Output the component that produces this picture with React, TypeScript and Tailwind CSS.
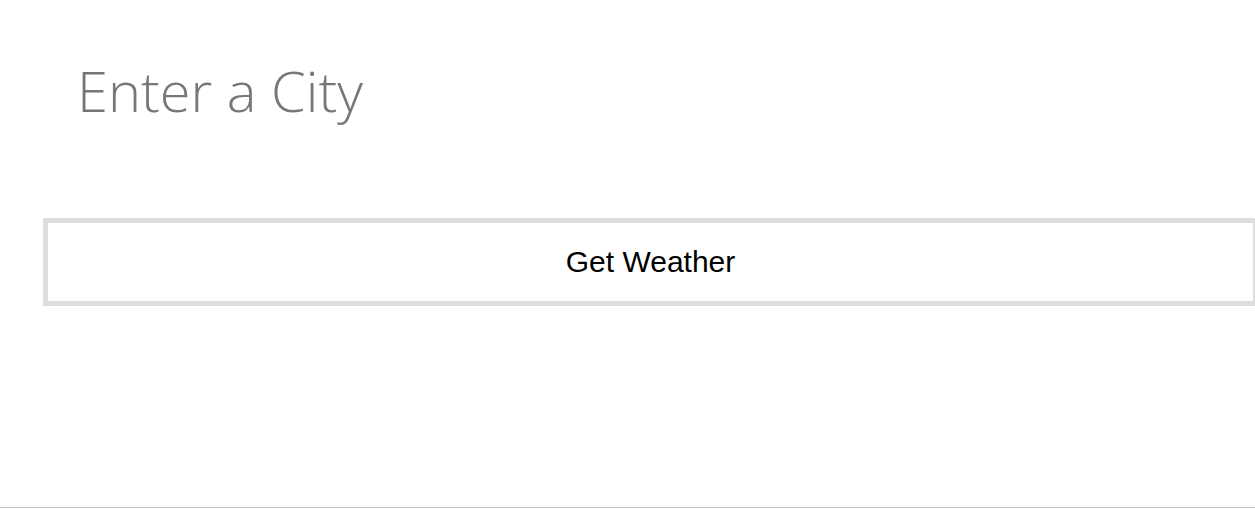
import React from "react";

const App: React.FC = () => {
    return (
        <div className="h-[508px] w-full overflow-hidden bg-white border-b border-[#c8c8c8]">
            <div className="pt-[62px] pl-[77px]">
                <div className="text-[56px] leading-[56px] font-light text-[#777777] [font-family:'Open_Sans',sans-serif]">
                    Enter a City
                </div>
            </div>

            <button
                type="button"
                className="mt-[100px] ml-[43px] flex h-[88px] w-[1215px] items-center justify-center border-[5px] border-[#dddddd] bg-white pb-[2px] text-[30px] text-black [font-family:'Liberation_Sans',Arial,sans-serif]"
            >
                Get Weather
            </button>
        </div>
    );
};

export default App;
